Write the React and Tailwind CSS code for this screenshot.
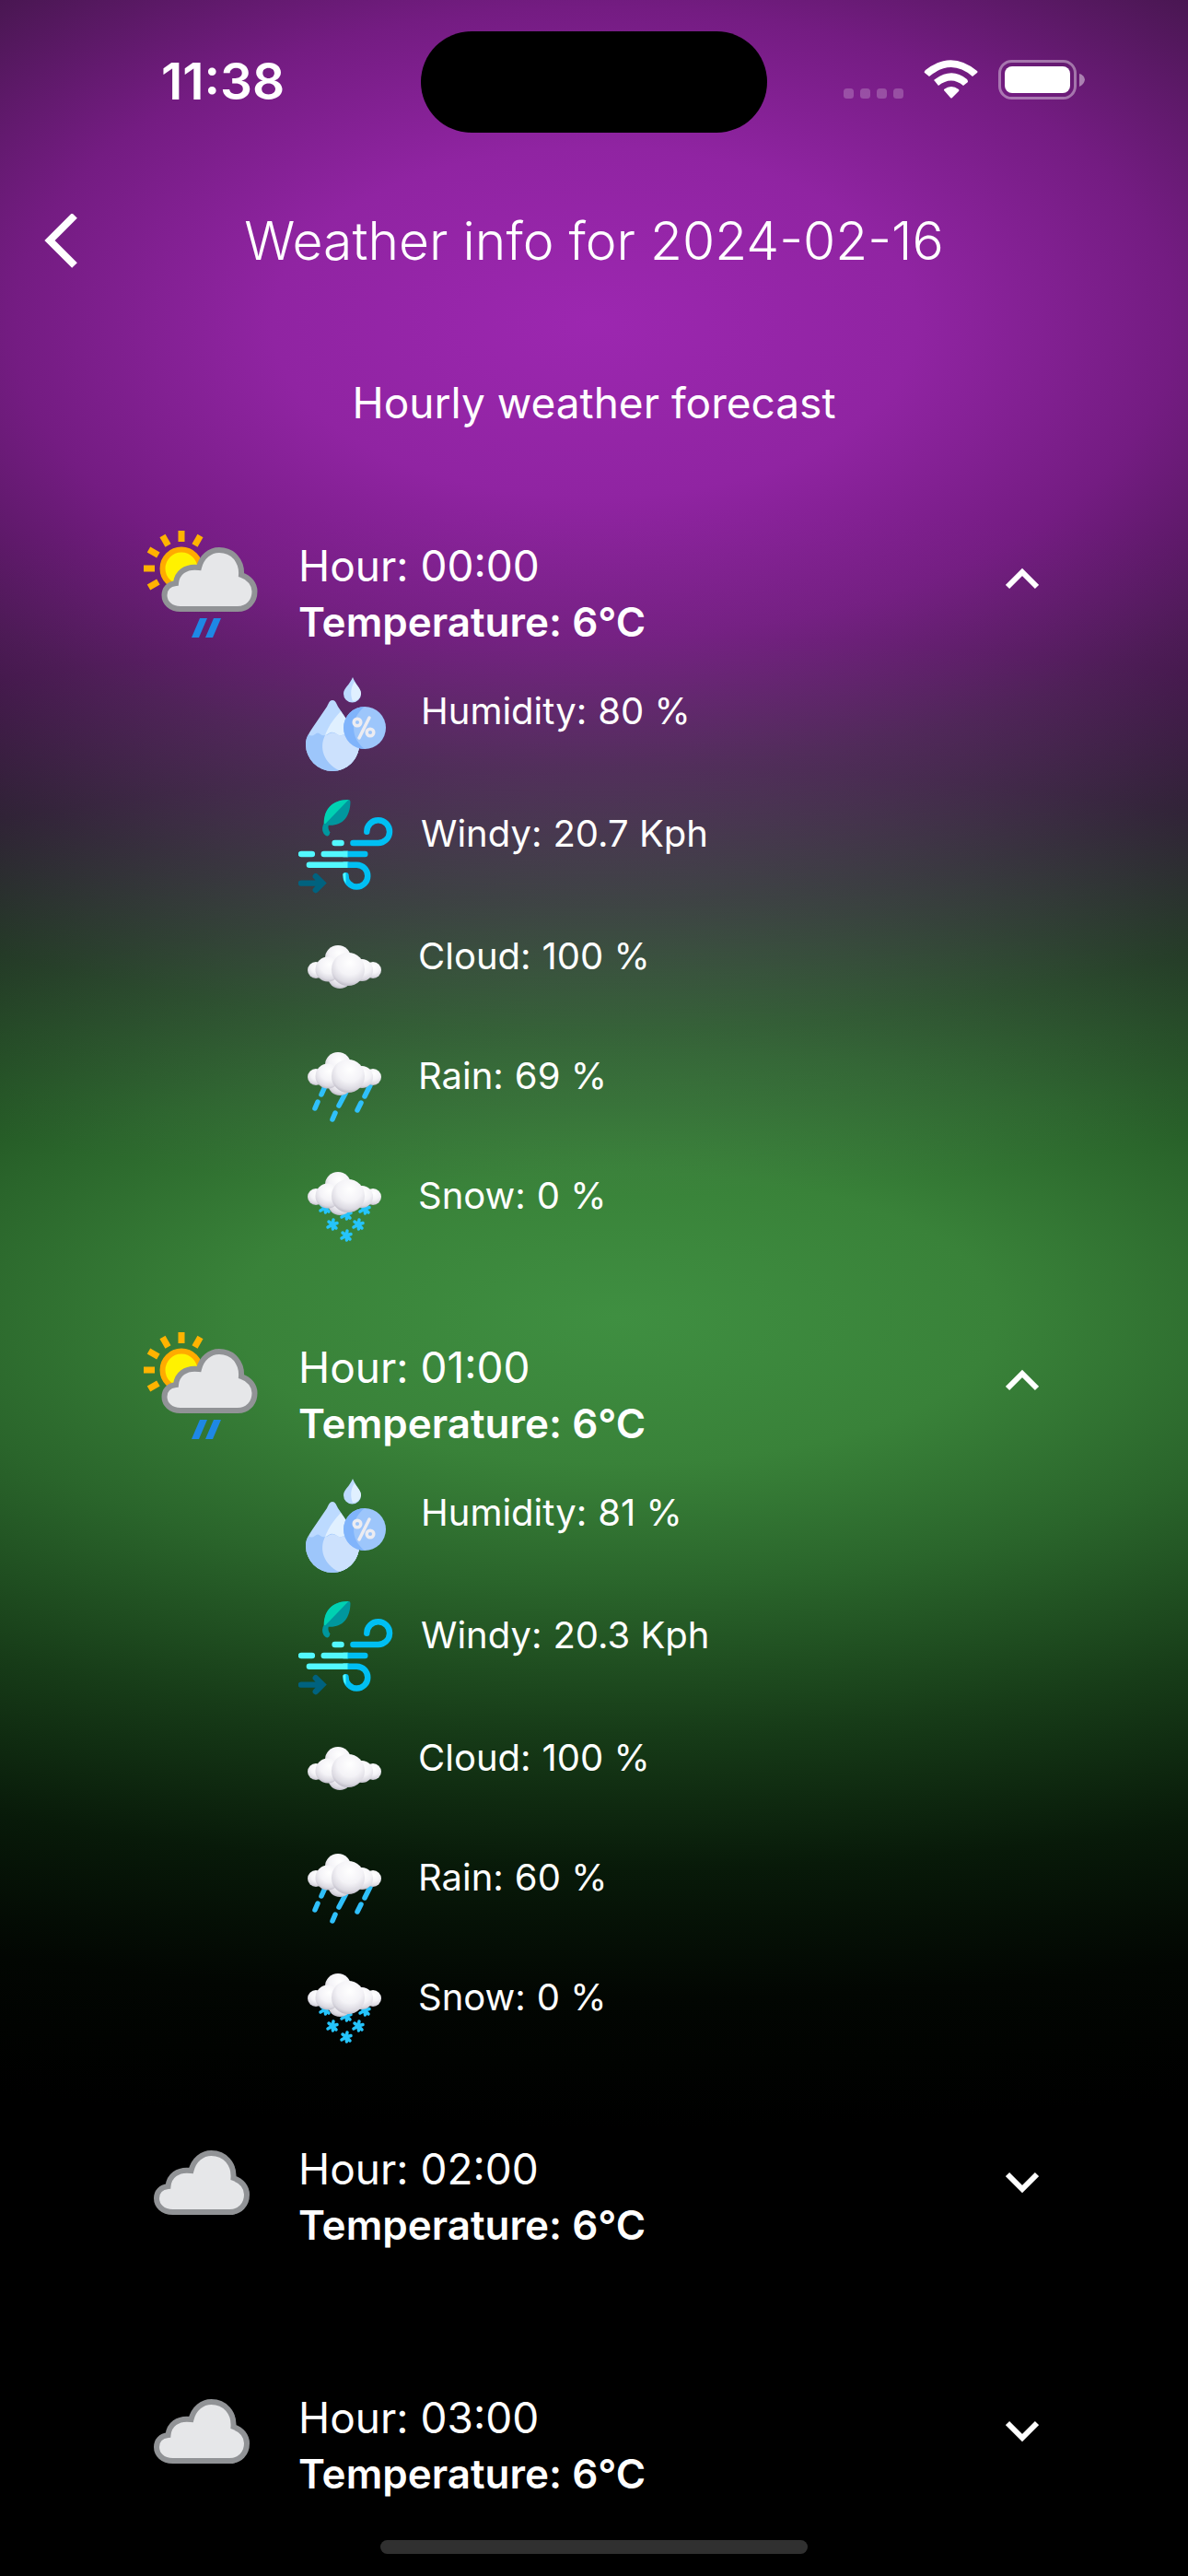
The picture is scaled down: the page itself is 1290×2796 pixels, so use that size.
import { useState } from "react";

function Chevron({ open }) {
  return (
    <svg className="h-[36px] w-[36px]" viewBox="0 0 36 36" fill="none" stroke="white" strokeWidth="6">
      <path d={open ? "M2 27 L18 11 L34 27" : "M2 10 L18 26 L34 10"} />
    </svg>
  );
}

const cloudOutline =
  "M42 85 C31 85 24.5 78 24.5 70 C24.5 63 29 58 37 57 C38 46 47 38 62 40 C65 28 74 21 84 21 C99 21 109 33 108 48 C117 51 122.5 58 122.5 66 C122.5 77 115 85 104 85 Z";

function SunCloudIcon() {
  return (
    <svg className="h-[126px] w-[126px]" viewBox="0 0 126 126">
      <g fill="#ffb300">
        <rect x="39.5" y="0" width="7" height="12" />
        <rect x="39.5" y="0" width="7" height="12" transform="rotate(30 43 41)" />
        <rect x="39.5" y="0" width="7" height="12" transform="rotate(-30 43 41)" />
        <rect x="39.5" y="0" width="7" height="12" transform="rotate(-60 43 41)" />
        <rect x="39.5" y="0" width="7" height="12" transform="rotate(-90 43 41)" />
        <rect x="39.5" y="0" width="7" height="12" transform="rotate(-120 43 41)" />
      </g>
      <circle cx="43" cy="41" r="20.5" fill="#fff200" stroke="#ffab00" strokeWidth="6" />
      <path d={cloudOutline} fill="#e6e7e9" stroke="#919396" strokeWidth="6" />
      <path d="M63 95 H71 L62 116 H54 Z M78 95 H86 L77 116 H69 Z" fill="#1e88e5" />
    </svg>
  );
}

function CloudIcon() {
  return (
    <svg className="h-[126px] w-[126px]" viewBox="8.5 0 126 126">
      <path d={cloudOutline} fill="#e6e7e9" stroke="#919396" strokeWidth="6" />
    </svg>
  );
}

function HumidityIcon() {
  return (
    <svg className="h-[103px] w-[103px]" viewBox="-2 0 103 103">
      <path d="M57 0 C60 8 66 12 66 18 A9 9 0 0 1 47 18 C47 12 54 8 57 0 Z" fill="#bcdaff" />
      <path d="M59 5 C62 10 66 13 66 18 A9 9 0 0 1 57 26 C54 19 55 10 59 5 Z" fill="#e0f0ff" />
      <path d="M35 25 C38 25 39 28 41 32 L56 54 C60 60 64 67 64 73 A29 29 0 0 1 6 73 C6 66 10 60 14 54 L29 32 C31 28 32 25 35 25 Z" fill="#bcdaff" />
      <path d="M44 37 L57 56 C61 62 64 67 64 73 A29 29 0 0 1 42 101 C18 88 20 62 44 37 Z" fill="#e0f0ff" />
      <path d="M9 62 Q12 65 16 62 Q19 59 22 62 Q26 65 31 61 Q35 58 40 62 Q44 65 49 61 L61 63 Q64 68 64 73 A29 29 0 0 1 6 73 Q6 66 9 62 Z" fill="#9dc6fb" />
      <path d="M27 63 Q30 63 32 61 Q36 59 40 62 Q45 65 49 61 L61 63 Q64 68 64 73 A29 29 0 0 1 42 101 C26 93 20 77 27 63 Z" fill="#cce1fd" />
      <circle cx="70" cy="55" r="23" fill="#9dc6fb" />
      <path d="M70 32 A23 23 0 0 0 70 78 C54 66 54 44 70 32 Z" fill="#80b4fb" />
      <g fill="none" stroke="#ececf1" strokeWidth="3.5" strokeLinecap="round">
        <circle cx="62" cy="49" r="3.8" />
        <circle cx="76" cy="60" r="3.8" />
        <path d="M75 44 L64 66" />
      </g>
    </svg>
  );
}

function WindIcon() {
  return (
    <svg className="h-[103px] w-[103px]" viewBox="0 1 104 104" fill="none" strokeWidth="6.5" strokeLinecap="round">
      <path d="M31 40 C27 35 28 31 29 28 C27 12 37 1 55 1 Q57 1 57 3 C57 20 48 30 33 29 Q32 33 35 37" fill="#00979e" />
      <path d="M28 29 C27 12 37 1 55 1 Z" fill="#00d1b2" />
      <path d="M29.5 30 Q28 35 31.5 38" stroke="#00979e" strokeWidth="5.5" />
      <path d="M40 48.5 H47 M3 60.5 H15 M28 60.5 H54 M12 72.5 H54" stroke="#53f8ff" />
      <path d="M60 48.5 H87 A12.5 12.5 0 1 0 75 36" stroke="#00bff3" />
      <path d="M54 60.5 H73 M54 72.5 H64 A12 12 0 1 1 52 84" stroke="#00bff3" />
      <path d="M49 84 Q48 81 52 81 V93 Q49 89 49 84 Z" fill="#53f8ff" />
      <path d="M54 60.5 H49 M54 72.5 H49" stroke="#53f8ff" strokeLinecap="butt" />
      <path d="M3 92.5 H24 M19 85 L26.5 92.5 L19 100" stroke="#00627f" />
    </svg>
  );
}

function PuffShapes() {
  return (
    <>
      <defs>
        <radialGradient id="puff" cx="0.55" cy="0.3" r="0.75">
          <stop offset="0" stopColor="#ffffff" />
          <stop offset="0.5" stopColor="#f4f3f7" />
          <stop offset="0.8" stopColor="#dcdae2" />
          <stop offset="1" stopColor="#b0adba" />
        </radialGradient>
      </defs>
      <g fill="url(#puff)">
        <circle cx="33" cy="14" r="14" />
        <circle cx="9" cy="27" r="9" />
        <circle cx="71" cy="27" r="9" />
        <circle cx="35" cy="34" r="13" />
        <circle cx="59" cy="27" r="12" />
        <circle cx="22" cy="26" r="13.5" />
        <circle cx="44" cy="26" r="18" />
      </g>
    </>
  );
}

function PuffyCloudIcon() {
  return (
    <svg className="h-[100px] w-[100px]" viewBox="-10 -25 100 100">
      <PuffShapes />
    </svg>
  );
}

function RainIcon() {
  return (
    <svg className="h-[100px] w-[100px]" viewBox="-10 -11 100 100">
      <path
        d="M19 37 L15 46 M11 54 L8 61 M42 43 L34 58 M30 66 L27 73 M68 36 L62 48 M58 55 L54 63"
        stroke="#2fc0fb"
        strokeWidth="5.5"
        strokeLinecap="round"
      />
      <PuffShapes />
    </svg>
  );
}

const flakes = [
  [19, 39],
  [42, 46],
  [62, 40],
  [27, 57],
  [55, 57],
  [42, 69],
];

function SnowIcon() {
  return (
    <svg className="h-[100px] w-[100px]" viewBox="-10 -11 100 100">
      <g stroke="#25c4fb" strokeWidth="3.5" strokeLinecap="round">
        {flakes.map(([x, y]) => (
          <path
            key={`${x}-${y}`}
            transform={`translate(${x} ${y})`}
            d="M0 0 L1 -5 M0 0 L5 -1.5 M0 0 L4 4 M0 0 L0.5 5 M0 0 L-5 3 M0 0 L-4 -3"
          />
        ))}
      </g>
      <PuffShapes />
    </svg>
  );
}

function StatusBar() {
  return (
    <header className="grid grid-cols-[1fr_376px_1fr] pt-[34px]">
      <time className="pt-[27px] pl-[175px] text-[55px] leading-[54px] font-semibold">11:38</time>
      <div className="h-[110px] rounded-full bg-black" />
      <svg className="mt-[23px] mr-[96px] ml-auto h-[60px] w-[278px]" viewBox="0 0 278 60">
        <g fill="white" fillOpacity="0.22">
          <rect x="0" y="39" width="11" height="11" rx="3.5" />
          <rect x="18" y="39" width="11" height="11" rx="3.5" />
          <rect x="36" y="39" width="11" height="11" rx="3.5" />
          <rect x="54" y="39" width="11" height="11" rx="3.5" />
        </g>
        <g fill="white">
          <path d="M89 19 Q87 21 88 22 L93 26 Q117 6 140 26 L145 22 Q146 21 145 20 Q117 -3 89 19 Z" />
          <path d="M99 31 L103 36 Q117 25 130 36 L135 32 Q135 30 134 29 Q117 15 98 30 Z" />
          <path d="M109 41 L116 49 Q117 50 118 49 L125 42 Q126 41 125 40 Q117 34 109 40 Z" />
        </g>
        <rect x="169.5" y="9.5" width="82" height="40" rx="13" fill="none" stroke="white" strokeOpacity="0.4" strokeWidth="3" />
        <rect x="175" y="15" width="71" height="29" rx="8" fill="white" />
        <path d="M256 23 Q261 24 262 29.5 Q261 35 256 37 Z" fill="white" fillOpacity="0.45" />
      </svg>
    </header>
  );
}

const detailRows = [
  { key: "humidity", label: "Humidity", unit: "%", Icon: HumidityIcon },
  { key: "wind", label: "Windy", unit: "Kph", Icon: WindIcon },
  { key: "cloud", label: "Cloud", unit: "%", Icon: PuffyCloudIcon },
  { key: "rain", label: "Rain", unit: "%", Icon: RainIcon },
  { key: "snow", label: "Snow", unit: "%", Icon: SnowIcon },
];

const hours = [
  { time: "00:00", temp: 6, Icon: SunCloudIcon, humidity: 80, wind: 20.7, cloud: 100, rain: 69, snow: 0, open: true },
  { time: "01:00", temp: 6, Icon: SunCloudIcon, humidity: 81, wind: 20.3, cloud: 100, rain: 60, snow: 0, open: true },
  { time: "02:00", temp: 6, Icon: CloudIcon, humidity: 82, wind: 19.8, cloud: 100, rain: 0, snow: 0, open: false },
  { time: "03:00", temp: 6, Icon: CloudIcon, humidity: 82, wind: 19.4, cloud: 100, rain: 0, snow: 0, open: false },
];

function HourItem({ hour }) {
  const [open, setOpen] = useState(hour.open);
  return (
    <li className={open ? "pb-[85px]" : "pb-[141px] last:pb-0"}>
      <button
        type="button"
        aria-expanded={open}
        onClick={() => setOpen(!open)}
        className="flex w-full items-start pr-[162px] pl-[154px] text-left"
      >
        <hour.Icon />
        <span className="ml-[44px] flex-1 pt-[7px]">
          <span className="block text-[46px] leading-[62px]">Hour: {hour.time}</span>
          <span className="block text-[44px] leading-[60px] font-semibold">Temperature: {hour.temp}°C</span>
        </span>
        <span className="pt-[34px]">
          <Chevron open={open} />
        </span>
      </button>
      {open && (
        <dl className="flex flex-col gap-[30px] pt-[30px] pl-[324px]">
          {detailRows.map(({ key, label, unit, Icon }) => (
            <div key={key} className="flex items-start gap-[30px]">
              <Icon />
              <div className="flex gap-3 pt-[10px] text-[40px] leading-[54px]">
                <dt>{label}:</dt>
                <dd>
                  {hour[key]} {unit}
                </dd>
              </div>
            </div>
          ))}
        </dl>
      )}
    </li>
  );
}

export default function App() {
  return (
    <div className="min-h-screen bg-black bg-[radial-gradient(ellipse_1750px_950px_at_50%_350px,#9c27b0_0%,#9024a2_20%,#741c82_36%,#4c1755_51%,#2c0b32_66%,#110413_81%,#000_100%),radial-gradient(ellipse_2300px_880px_at_52%_1430px,#3f8f41_0%,#398239_18%,#2a652b_33%,#173c18_51%,#081a09_68%,#020602_84%,#000_100%)] bg-blend-screen font-[Inter,sans-serif] text-white">
      <StatusBar />
      <nav className="grid grid-cols-[130px_1fr_130px] items-center pt-[74px]">
        <button type="button" aria-label="Back" className="pl-[47px]">
          <svg className="h-[60px] w-[38px]" viewBox="0 0 38 60" fill="none" stroke="white" strokeWidth="8">
            <path d="M34 2 L7 29 L34 56" />
          </svg>
        </button>
        <h1 className="text-center text-[57px] leading-[88px] font-light">Weather info for 2024-02-16</h1>
      </nav>
      <main>
        <h2 className="pt-[103px] text-center text-[46px] leading-[56px]">Hourly weather forecast</h2>
        <ul className="pt-[111px]">
          {hours.map((hour) => (
            <HourItem key={hour.time} hour={hour} />
          ))}
        </ul>
      </main>
      <div className="fixed inset-x-0 bottom-6 mx-auto h-[15px] w-[36%] rounded-full bg-[#303030]" />
    </div>
  );
}
